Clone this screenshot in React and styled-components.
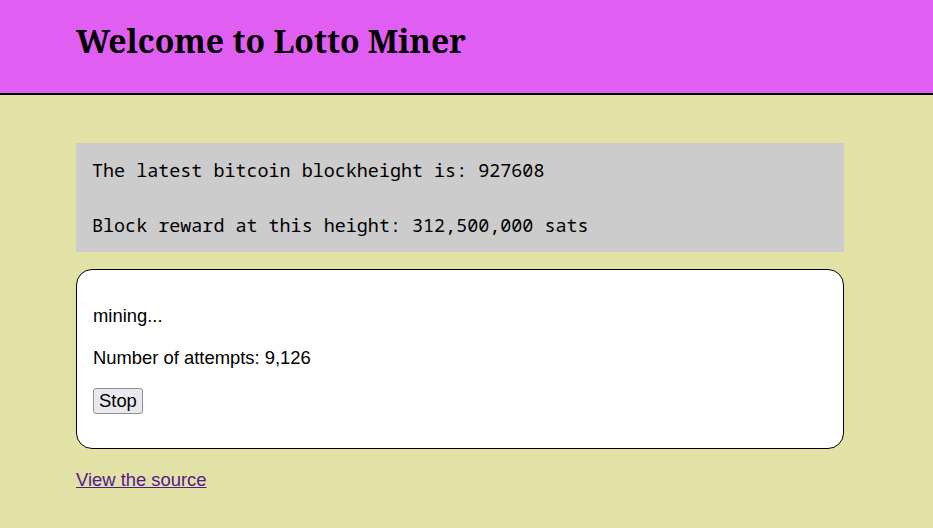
import React from "react";
import styled, { createGlobalStyle } from "styled-components";

const GlobalStyle = createGlobalStyle`
  html, body {
    margin: 0;
    padding: 0;
    background: #e2e1a6;
  }
  body {
    font-family: "Liberation Sans", Arial, sans-serif;
    font-size: 18.4px;
    color: #000;
  }
`;

const Header = styled.header`
  box-sizing: border-box;
  height: 95px;
  padding: 22px 76px 0;
  background: #e05ef2;
  border-bottom: 2px solid #000;
`;

const Title = styled.h1`
  margin: 0;
  font-family: "Noto Serif", "DejaVu Serif", serif;
  font-size: 32px;
  line-height: 38px;
  font-weight: bold;
`;

const Main = styled.main`
  max-width: 768px;
  padding: 48px 0 0 76px;
`;

const InfoBox = styled.div`
  display: flex;
  flex-direction: column;
  gap: 33px;
  padding: 16px;
  background: #cccccc;
  font-family: "Noto Sans Mono", "Liberation Mono", monospace;
  font-size: 18.4px;
  line-height: 22px;
`;

const Card = styled.section`
  margin-top: 17px;
  padding: 16px;
  background: #fff;
  border: 1px solid #000;
  border-radius: 16px;
`;

const Para = styled.p`
  margin: 18px 0;
  line-height: 24px;
`;

const Button = styled.button`
  display: block;
  box-sizing: border-box;
  font-family: "Liberation Sans", Arial, sans-serif;
  font-size: 18.4px;
  height: 26px;
  padding: 0 5px;
  color: #000;
  background: #e9e9ed;
  border: 1px solid #8f8f9d;
  border-radius: 3px;
`;

const ButtonRow = styled.div`
  margin: 17px 0 18px;
`;

const SourceLink = styled.a`
  display: inline-block;
  margin-top: 20px;
  color: #551a8b;
  text-decoration: underline;
`;

export default function App() {
  return (
    <>
      <GlobalStyle />
      <Header>
        <Title>Welcome to Lotto Miner</Title>
      </Header>
      <Main>
        <InfoBox>
          <div>The latest bitcoin blockheight is: 927608</div>
          <div>Block reward at this height: 312,500,000 sats</div>
        </InfoBox>
        <Card>
          <Para>mining...</Para>
          <Para>Number of attempts: 9,126</Para>
          <ButtonRow>
            <Button>Stop</Button>
          </ButtonRow>
        </Card>
        <SourceLink href="#">View the source</SourceLink>
      </Main>
    </>
  );
}
